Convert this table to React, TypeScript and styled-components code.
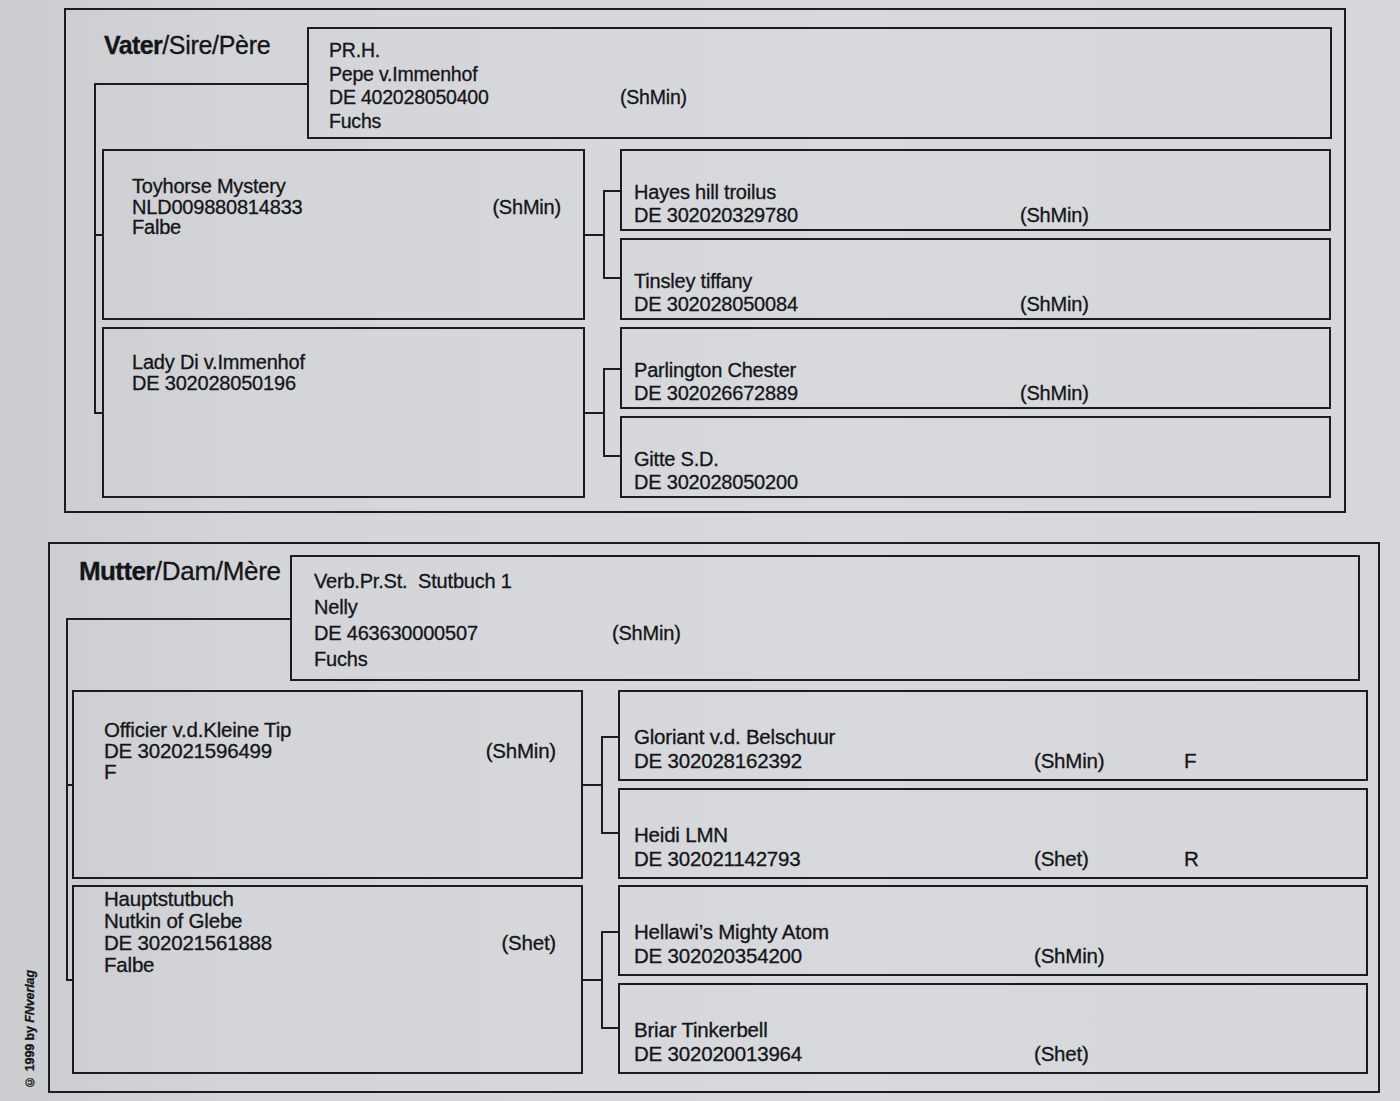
import styled, { createGlobalStyle } from "styled-components";

type Horse = {
  lines: string[];
  breed?: string;
  breedLine?: number;
  mark?: string;
  padTop?: number;
  lineH?: number;
};

type Spec = {
  bold: string;
  rest: string;
  titleSize: number;
  titleInset: number;
  titlePad: number;
  width: number;
  padTop: number;
  padBottom: number;
  cellW: number;
  spineInset: number;
  spineW: number;
  parentH: number;
  parentMr: number;
  parentPt: number;
  parentPl: number;
  parentFont: number;
  parentLine: number;
  parentCol: number;
  gap: number;
  pairH: number;
  pairGap: number;
  ggGap: number;
  pairsMr: number;
  grandW: number;
  grandPl: number;
  grandPr: number;
  grandFont: number;
  ggPl: number;
  ggPb: number;
  ggFont: number;
  ggLine: number;
  ggCol: number;
  parent: Horse;
  grand: Horse[];
  gg: Horse[];
};

const sire: Spec = {
  bold: "Vater",
  rest: "/Sire/Père",
  titleSize: 25,
  titleInset: 38,
  titlePad: 4,
  width: 1282,
  padTop: 17,
  padBottom: 13,
  cellW: 241,
  spineInset: 28,
  spineW: 8,
  parentH: 112,
  parentMr: 12,
  parentPt: 10,
  parentPl: 20,
  parentFont: 19.5,
  parentLine: 23.5,
  parentCol: 291,
  gap: 10,
  pairH: 171,
  pairGap: 7,
  ggGap: 7,
  pairsMr: 13,
  grandW: 483,
  grandPl: 28,
  grandPr: 22,
  grandFont: 20,
  ggPl: 12,
  ggPb: 2,
  ggFont: 20,
  ggLine: 23,
  ggCol: 386,
  parent: {
    lines: ["PR.H.", "Pepe v.Immenhof", "DE 402028050400", "Fuchs"],
    breed: "(ShMin)",
    breedLine: 2,
  },
  grand: [
    {
      lines: ["Toyhorse Mystery", "NLD009880814833", "Falbe"],
      breed: "(ShMin)",
      breedLine: 1,
      padTop: 25,
      lineH: 20.5,
    },
    {
      lines: ["Lady Di v.Immenhof", "DE 302028050196"],
      padTop: 23,
      lineH: 20.5,
    },
  ],
  gg: [
    { lines: ["Hayes hill troilus", "DE 302020329780"], breed: "(ShMin)", breedLine: 1 },
    { lines: ["Tinsley tiffany", "DE 302028050084"], breed: "(ShMin)", breedLine: 1 },
    { lines: ["Parlington Chester", "DE 302026672889"], breed: "(ShMin)", breedLine: 1 },
    { lines: ["Gitte S.D.", "DE 302028050200"] },
  ],
};

const dam: Spec = {
  bold: "Mutter",
  rest: "/Dam/Mère",
  titleSize: 26,
  titleInset: 29,
  titlePad: 2,
  width: 1332,
  padTop: 11,
  padBottom: 17,
  cellW: 240,
  spineInset: 16,
  spineW: 6,
  parentH: 126,
  parentMr: 18,
  parentPt: 11,
  parentPl: 22,
  parentFont: 20,
  parentLine: 26,
  parentCol: 298,
  gap: 9,
  pairH: 189,
  pairGap: 6,
  ggGap: 7,
  pairsMr: 10,
  grandW: 511,
  grandPl: 30,
  grandPr: 25,
  grandFont: 20.5,
  ggPl: 14,
  ggPb: 6,
  ggFont: 20.5,
  ggLine: 24,
  ggCol: 400,
  parent: {
    lines: ["Verb.Pr.St.  Stutbuch 1", "Nelly", "DE 463630000507", "Fuchs"],
    breed: "(ShMin)",
    breedLine: 2,
  },
  grand: [
    {
      lines: ["Officier v.d.Kleine Tip", "DE 302021596499", "F"],
      breed: "(ShMin)",
      breedLine: 1,
      padTop: 27,
      lineH: 21,
    },
    {
      lines: ["Hauptstutbuch", "Nutkin of Glebe", "DE 302021561888", "Falbe"],
      breed: "(Shet)",
      breedLine: 2,
      padTop: 1,
      lineH: 22,
    },
  ],
  gg: [
    { lines: ["Gloriant v.d. Belschuur", "DE 302028162392"], breed: "(ShMin)", breedLine: 1, mark: "F" },
    { lines: ["Heidi LMN", "DE 302021142793"], breed: "(Shet)", breedLine: 1, mark: "R" },
    { lines: ["Hellawi’s Mighty Atom", "DE 302020354200"], breed: "(ShMin)", breedLine: 1 },
    { lines: ["Briar Tinkerbell", "DE 302020013964"], breed: "(Shet)", breedLine: 1 },
  ],
};

const Lines = ({ horse, col }: { horse: Horse; col?: number }) => (
  <>
    {horse.lines.map((text, i) => {
      const hasBreed = horse.breed && horse.breedLine === i;
      return (
        <Line key={i}>
          <Cell $w={hasBreed ? col : undefined}>{text}</Cell>
          {hasBreed && (
            <Breed $push={!col} $w={horse.mark ? 150 : undefined}>
              {horse.breed}
            </Breed>
          )}
          {hasBreed && horse.mark && <Cell>{horse.mark}</Cell>}
        </Line>
      );
    })}
  </>
);

const Pedigree = ({ spec }: { spec: Spec }) => {
  const ggH = (spec.pairH - spec.ggGap) / 2;
  const spineH = Math.round(spec.gap + spec.pairH + spec.pairGap + spec.pairH / 2 + 1);
  const tickTop = Math.round(spec.gap + spec.pairH / 2 - 1);

  return (
    <Frame $w={spec.width} $pt={spec.padTop} $pb={spec.padBottom}>
      <Head>
        <TitleCell $w={spec.cellW}>
          <Title
            $h={spec.parentH / 2}
            $size={spec.titleSize}
            $inset={spec.titleInset}
            $pad={spec.titlePad}
          >
            <b>{spec.bold}</b>
            {spec.rest}
          </Title>
          <Elbow $inset={spec.spineInset} />
        </TitleCell>
        <ParentBox
          $h={spec.parentH}
          $mr={spec.parentMr}
          $pt={spec.parentPt}
          $pl={spec.parentPl}
          $fs={spec.parentFont}
          $lh={spec.parentLine}
        >
          <Lines horse={spec.parent} col={spec.parentCol} />
        </ParentBox>
      </Head>
      <Body>
        <Spine $inset={spec.spineInset} $w={spec.spineW} $h={spineH}>
          <Tick $top={tickTop} />
        </Spine>
        <Pairs $mt={spec.gap} $gap={spec.pairGap} $mr={spec.pairsMr}>
          {spec.grand.map((g, i) => (
            <Pair key={i} $h={spec.pairH}>
              <GrandBox
                $w={spec.grandW}
                $pt={g.padTop ?? 0}
                $pl={spec.grandPl}
                $pr={spec.grandPr}
                $fs={spec.grandFont}
                $lh={g.lineH ?? 20}
              >
                <Lines horse={g} />
              </GrandBox>
              <Bracket>
                <Stem />
                <Fork $h={ggH + spec.ggGap} />
              </Bracket>
              <GGStack $gap={spec.ggGap}>
                {spec.gg.slice(i * 2, i * 2 + 2).map((h, j) => (
                  <GGBox
                    key={j}
                    $pl={spec.ggPl}
                    $pb={spec.ggPb}
                    $fs={spec.ggFont}
                    $lh={spec.ggLine}
                  >
                    <Lines horse={h} col={spec.ggCol} />
                  </GGBox>
                ))}
              </GGStack>
            </Pair>
          ))}
        </Pairs>
      </Body>
    </Frame>
  );
};

export default function App() {
  return (
    <>
      <GlobalStyle />
      <Page>
        <Row $indent={52}>
          <Pedigree spec={sire} />
        </Row>
        <Row $indent={0}>
          <NoteCol>
            <Note>
              © 1999 by <i>FNverlag</i>
            </Note>
          </NoteCol>
          <Pedigree spec={dam} />
        </Row>
      </Page>
    </>
  );
}

const ink = "#1b1c1e";

const GlobalStyle = createGlobalStyle`
  html, body {
    margin: 0;
    padding: 0;
  }

  body {
    background: linear-gradient(90deg, #caccd0 0%, #d3d5d9 18%, #d7d9dd 60%, #d5d7db 100%);
    color: #141517;
    font-family: "Liberation Sans", Arial, sans-serif;
    -webkit-text-stroke: 0.3px #141517;
  }

  * {
    box-sizing: border-box;
  }
`;

const Page = styled.main`
  width: 1400px;
  min-height: 1101px;
  padding: 8px 0 0 12px;
  display: flex;
  flex-direction: column;
  gap: 29px;
`;

const Row = styled.div<{ $indent: number }>`
  display: flex;
  padding-left: ${(p) => p.$indent}px;
`;

const NoteCol = styled.div`
  flex: 0 0 36px;
  display: flex;
  justify-content: center;
  align-items: flex-end;
  padding-bottom: 4px;
`;

const Note = styled.div`
  writing-mode: vertical-rl;
  transform: rotate(180deg);
  font-size: 12.5px;
  font-weight: 700;
  white-space: nowrap;
  letter-spacing: -0.1px;
`;

const Frame = styled.section<{ $w: number; $pt: number; $pb: number }>`
  width: ${(p) => p.$w}px;
  flex: none;
  border: 2px solid ${ink};
  padding: ${(p) => p.$pt}px 0 ${(p) => p.$pb}px 0;
  display: flex;
  flex-direction: column;
`;

const Head = styled.div`
  display: flex;
`;

const TitleCell = styled.div<{ $w: number }>`
  flex: 0 0 ${(p) => p.$w}px;
  display: flex;
  flex-direction: column;
`;

const Title = styled.h2<{ $h: number; $size: number; $inset: number; $pad: number }>`
  margin: 0;
  flex: 0 0 ${(p) => p.$h}px;
  padding: ${(p) => p.$pad}px 0 0 ${(p) => p.$inset}px;
  font-size: ${(p) => p.$size}px;
  line-height: 28px;
  font-weight: 400;
  letter-spacing: -0.3px;
  white-space: nowrap;

  b {
    font-weight: 700;
    letter-spacing: -0.6px;
  }
`;

const Elbow = styled.div<{ $inset: number }>`
  flex: 1;
  margin-left: ${(p) => p.$inset}px;
  border-top: 2px solid ${ink};
  border-left: 2px solid ${ink};
`;

const ParentBox = styled.div<{
  $h: number;
  $mr: number;
  $pt: number;
  $pl: number;
  $fs: number;
  $lh: number;
}>`
  flex: 1;
  height: ${(p) => p.$h}px;
  margin-right: ${(p) => p.$mr}px;
  border: 2px solid ${ink};
  padding: ${(p) => p.$pt}px 0 0 ${(p) => p.$pl}px;
  font-size: ${(p) => p.$fs}px;
  line-height: ${(p) => p.$lh}px;
`;

const Body = styled.div`
  display: flex;
  align-items: flex-start;
`;

const Spine = styled.div<{ $inset: number; $w: number; $h: number }>`
  flex: none;
  margin-left: ${(p) => p.$inset}px;
  width: ${(p) => p.$w}px;
  height: ${(p) => p.$h}px;
  border-left: 2px solid ${ink};
  border-bottom: 2px solid ${ink};
`;

const Tick = styled.div<{ $top: number }>`
  margin-top: ${(p) => p.$top}px;
  height: 2px;
  background: ${ink};
`;

const Pairs = styled.div<{ $mt: number; $gap: number; $mr: number }>`
  flex: 1;
  display: flex;
  flex-direction: column;
  gap: ${(p) => p.$gap}px;
  margin-top: ${(p) => p.$mt}px;
  margin-right: ${(p) => p.$mr}px;
`;

const Pair = styled.div<{ $h: number }>`
  display: flex;
  height: ${(p) => p.$h}px;
`;

const GrandBox = styled.div<{
  $w: number;
  $pt: number;
  $pl: number;
  $pr: number;
  $fs: number;
  $lh: number;
}>`
  flex: 0 0 ${(p) => p.$w}px;
  border: 2px solid ${ink};
  padding: ${(p) => p.$pt}px ${(p) => p.$pr}px 0 ${(p) => p.$pl}px;
  font-size: ${(p) => p.$fs}px;
  line-height: ${(p) => p.$lh}px;
`;

const Bracket = styled.div`
  flex: 0 0 35px;
  display: flex;
  align-items: center;
`;

const Stem = styled.div`
  flex: 0 0 18px;
  border-top: 2px solid ${ink};
`;

const Fork = styled.div<{ $h: number }>`
  flex: 1;
  height: ${(p) => p.$h}px;
  border: 2px solid ${ink};
  border-right: none;
`;

const GGStack = styled.div<{ $gap: number }>`
  flex: 1;
  display: flex;
  flex-direction: column;
  gap: ${(p) => p.$gap}px;
`;

const GGBox = styled.div<{ $pl: number; $pb: number; $fs: number; $lh: number }>`
  flex: 1;
  border: 2px solid ${ink};
  display: flex;
  flex-direction: column;
  justify-content: flex-end;
  padding: 0 0 ${(p) => p.$pb}px ${(p) => p.$pl}px;
  font-size: ${(p) => p.$fs}px;
  line-height: ${(p) => p.$lh}px;
`;

const Line = styled.div`
  display: flex;
  white-space: pre;
  letter-spacing: -0.2px;
`;

const Cell = styled.span<{ $w?: number }>`
  flex: ${(p) => (p.$w ? `0 0 ${p.$w}px` : "none")};
`;

const Breed = styled.span<{ $push?: boolean; $w?: number }>`
  flex: ${(p) => (p.$w ? `0 0 ${p.$w}px` : "none")};
  margin-left: ${(p) => (p.$push ? "auto" : "0")};
`;
